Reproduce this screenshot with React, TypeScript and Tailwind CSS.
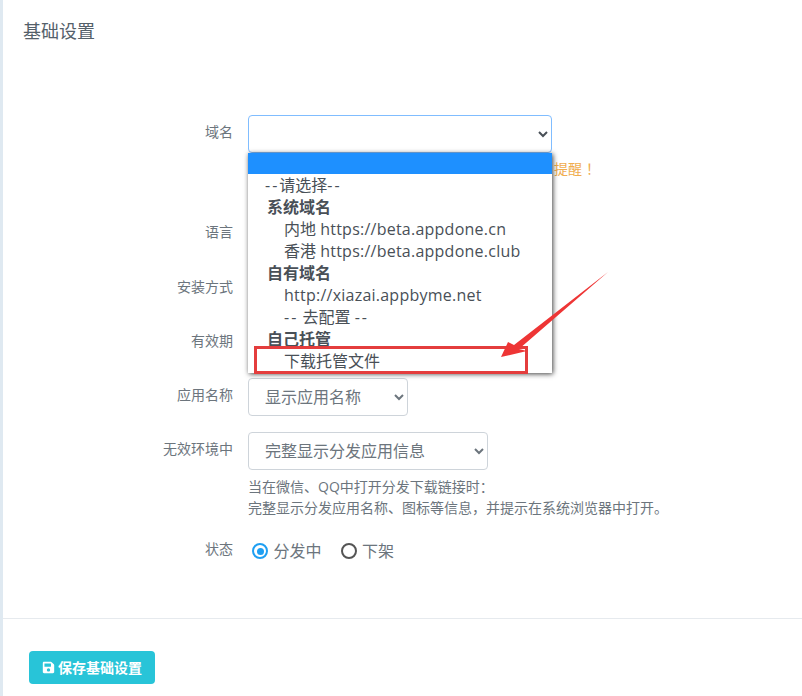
import { FaSave } from "react-icons/fa";

const font = "font-['Open_Sans','Noto_Sans_CJK_SC',sans-serif]";

function Row({ label, top, children }: { label: string; top: string; children?: React.ReactNode }) {
  return (
    <div className={`flex min-h-[38px] items-start ${top}`}>
      <label className="w-[230px] pt-[6px] text-right text-[14px] leading-[21px] text-[#6c757d]">
        {label}
      </label>
      <div className="ml-[15px]">{children}</div>
    </div>
  );
}

function Select({ width, options }: { width: string; options: string[] }) {
  return (
    <select
      className={`${width} h-[38px] rounded border border-[#ced4da] bg-white pl-[12px] text-[16px] text-[#6c757d]`}
    >
      {options.map((o) => (
        <option key={o}>{o}</option>
      ))}
    </select>
  );
}

function Radio({ label, checked }: { label: string; checked?: boolean }) {
  return (
    <span className="flex items-center gap-[5.5px] text-[16px] text-[#6c757d]">
      <span
        className={`flex h-[16px] w-[16px] items-center justify-center rounded-full border-[2.5px] ${
          checked ? "border-[#1e9ff2]" : "border-[#555555]"
        }`}
      >
        {checked && <span className="h-[7px] w-[7px] rounded-full bg-[#1e9ff2]" />}
      </span>
      {label}
    </span>
  );
}

const Group = ({ children }: { children: string }) => (
  <div className="pl-[19px] font-bold">{children}</div>
);
const Item = ({ children }: { children: React.ReactNode }) => <div className="pl-[36px]">{children}</div>;
const Url = ({ children }: { children: string }) => <span className="tracking-[0.24px]">{children}</span>;
const Dash = () => <span className="tracking-[2px]">--</span>;

export default function App() {
  return (
    <div className={`relative h-[696px] overflow-hidden border-l-[3px] border-[#dfe9f1] bg-white ${font}`}>
      <h2 className="pl-[20px] pt-[19px] text-[18px] leading-[24px] text-[#54606a]">基础设置</h2>

      <div className="mt-[72px]">
        <Row label="域名" top="">
          <select className="h-[38px] w-[304px] rounded border border-[#80bdff] bg-white text-[#495057]" />
          <p className="mt-[5px] w-[352px] text-right text-[14px] leading-[21px] text-[#f0ad4e]">
            提醒<span className="ml-[4px]">！</span>
          </p>
        </Row>
        <Row label="语言" top="mt-[36px]" />
        <Row label="安装方式" top="mt-[17px]" />
        <Row label="有效期" top="mt-[16px]" />
        <Row label="应用名称" top="mt-[16px]">
          <Select width="w-[160px]" options={["显示应用名称"]} />
        </Row>
        <Row label="无效环境中" top="mt-[16px]">
          <Select width="w-[240px]" options={["完整显示分发应用信息"]} />
          <p className="mt-[6px] text-[14px] leading-[21px] text-[#6c757d]">
            当在微信、QQ中打开分发下载链接时：
            <br />
            完整显示分发应用名称、图标等信息，并提示在系统浏览器中打开。
          </p>
        </Row>
        <Row label="状态" top="mt-[14px]">
          <div className="flex h-[38px] items-center gap-[19px] pl-[4px]">
            <Radio label="分发中" checked />
            <Radio label="下架" />
          </div>
        </Row>
      </div>

      <div className="mt-[48px] border-t border-[#e6eaee]" />

      <button className="ml-[26px] mt-[32px] flex h-[33px] w-[126px] items-center justify-center gap-[3px] rounded bg-[#28c4d8] text-[14px] font-bold text-white">
        <FaSave className="h-[13px] w-[13px]" />
        保存基础设置
      </button>

      {/* opened dropdown list */}
      <div className="absolute left-[245px] top-[153px] h-[220px] w-[304px] overflow-hidden bg-white text-[16px] leading-[22px] text-[#495057] shadow-[1px_1px_5px_rgba(0,0,0,0.75)]">
        <div className="h-[21px] bg-[#1e90ff]" />
        <div className="pl-[17px]">
          <Dash />请选择<Dash />
        </div>
        <Group>系统域名</Group>
        <Item>
          内地 <Url>https://beta.appdone.cn</Url>
        </Item>
        <Item>
          香港 <Url>https://beta.appdone.club</Url>
        </Item>
        <Group>自有域名</Group>
        <Item>
          <Url>http://xiazai.appbyme.net</Url>
        </Item>
        <Item>
          <Dash /> 去配置 <Dash />
        </Item>
        <Group>自己托管</Group>
        <Item>下载托管文件</Item>
      </div>

      {/* red annotation */}
      <div className="absolute left-[251px] top-[346px] h-[28px] w-[274px] border-[3px] border-[#e43d3d]" />
      <svg className="absolute left-[-3px] top-0" width="802" height="696" viewBox="0 0 802 696" fill="none">
        <path d="M608 272 L519 349 L527 351 L501 357 L508 342 L514 345 Z" fill="#ee3535" />
      </svg>
    </div>
  );
}
